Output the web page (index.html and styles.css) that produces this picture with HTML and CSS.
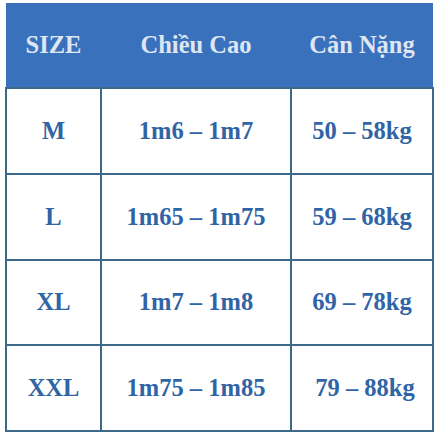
FILE: index.html
```html
<!DOCTYPE html>
<html lang="vi">
<head>
<meta charset="utf-8">
<link rel="stylesheet" href="styles.css">
</head>
<body>
<div class="wrap">
<table class="size-table">
  <colgroup>
    <col class="c1"><col class="c2"><col class="c3">
  </colgroup>
  <thead>
    <tr><th>SIZE</th><th>Chiều Cao</th><th>Cân Nặng</th></tr>
  </thead>
  <tbody>
    <tr><td>M</td><td>1m6 – 1m7</td><td>50 – 58kg</td></tr>
    <tr><td>L</td><td>1m65 – 1m75</td><td>59 – 68kg</td></tr>
    <tr><td>XL</td><td>1m7 – 1m8</td><td>69 – 78kg</td></tr>
    <tr><td>XXL</td><td>1m75 – 1m85</td><td>&nbsp;79 – 88kg</td></tr>
  </tbody>
</table>
</div>
</body>
</html>
```
FILE: styles.css
```css
html, body {
  margin: 0;
  padding: 0;
  background: #ffffff;
  font-family: "Liberation Serif", "Times New Roman", Times, serif;
}
.wrap {
  padding: 3px 0 0 5px;
}
.size-table {
  border-collapse: collapse;
  table-layout: fixed;
  width: 427px;
}
.c1 { width: 95px; }
.c2 { width: 190px; }
.c3 { width: 142px; }
.size-table th,
.size-table td {
  font-family: "Liberation Serif", "Times New Roman", Times, serif;
  font-weight: 700;
  font-size: 24.5px;
  padding: 0;
  text-align: center;
  vertical-align: middle;
}
.size-table th {
  background: #3a71bd;
  color: #dde6f1;
  height: 84px;
  border-bottom: 2px solid #3d6a88;
}
.size-table td {
  height: 83.8px;
  color: #2f64a6;
  border: 2px solid #3d6a88;
}
```
